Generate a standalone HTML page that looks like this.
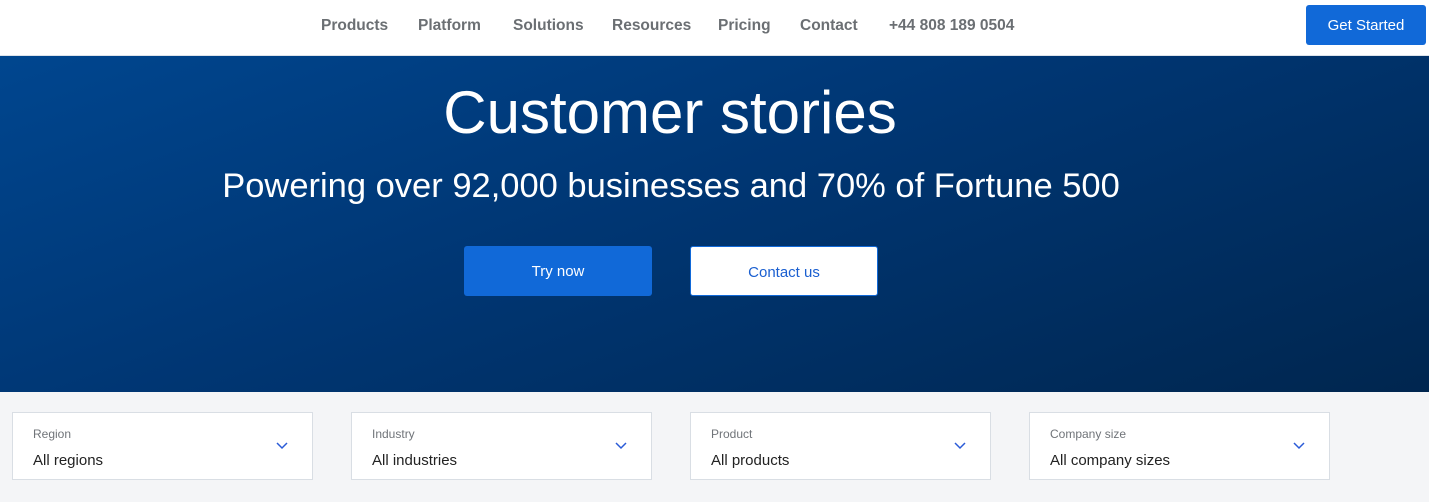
<!DOCTYPE html>
<html><head><meta charset="utf-8"><style>
*{margin:0;padding:0;box-sizing:border-box}
body{width:1429px;height:502px;overflow:hidden;font-family:"Liberation Sans",sans-serif;background:#f4f5f7}
.hdr{height:56px;background:#fff;border-bottom:1px solid #dde3ea;position:relative}
.nav span{position:absolute;top:17px;font-size:15.5px;font-weight:600;color:#6b6f73;white-space:nowrap}
.gs{position:absolute;left:1306px;top:5px;width:120px;height:40px;background:#1169d8;color:#fff;border-radius:3px;font-size:15px;text-align:center;line-height:42px}
.hero{height:336px;background:linear-gradient(160deg,#00468f 0%,#003673 45%,#00264f 100%);position:relative;color:#fff}
.h1{position:absolute;top:22px;left:0;width:1340px;text-align:center;font-size:60px}
.h2{position:absolute;top:111px;left:0;width:1342px;text-align:center;font-size:34.5px}
.b{position:absolute;top:190px;width:188px;height:50px;border-radius:3px;font-size:15px;line-height:52px;text-align:center}
.b1{left:464px;background:#1169d8;color:#fff}
.b2{left:690px;background:#fff;color:#1a5fd0;border:1px solid #1169d8}
.f{position:absolute;top:412px;width:301px;height:68px;background:#fff;border:1px solid #d9dee4}
.f .l{position:absolute;left:20px;top:14px;font-size:12px;color:#707479}
.f .v{position:absolute;left:20px;top:39px;font-size:15px;color:#222}
.f svg{position:absolute;left:263px;top:29px}
</style></head><body>
<div class="hdr"><div class="nav"><span style="left:321px">Products</span><span style="left:418px">Platform</span><span style="left:513px">Solutions</span><span style="left:612px">Resources</span><span style="left:718px">Pricing</span><span style="left:800px">Contact</span><span style="left:889px">+44 808 189 0504</span></div><div class="gs">Get Started</div></div>
<div class="hero"><div class="h1">Customer stories</div><div class="h2">Powering over 92,000 businesses and 70% of Fortune 500</div>
<div class="b b1">Try now</div><div class="b b2">Contact us</div></div>
<div class="f" style="left:12px"><div class="l">Region</div><div class="v">All regions</div><svg width="12" height="8"><path d="M1 1l5 5 5-5" fill="none" stroke="#2a5bd7" stroke-width="1.5"/></svg></div>
<div class="f" style="left:351px"><div class="l">Industry</div><div class="v">All industries</div><svg width="12" height="8"><path d="M1 1l5 5 5-5" fill="none" stroke="#2a5bd7" stroke-width="1.5"/></svg></div>
<div class="f" style="left:690px"><div class="l">Product</div><div class="v">All products</div><svg width="12" height="8"><path d="M1 1l5 5 5-5" fill="none" stroke="#2a5bd7" stroke-width="1.5"/></svg></div>
<div class="f" style="left:1029px"><div class="l">Company size</div><div class="v">All company sizes</div><svg width="12" height="8"><path d="M1 1l5 5 5-5" fill="none" stroke="#2a5bd7" stroke-width="1.5"/></svg></div>
</body></html>
